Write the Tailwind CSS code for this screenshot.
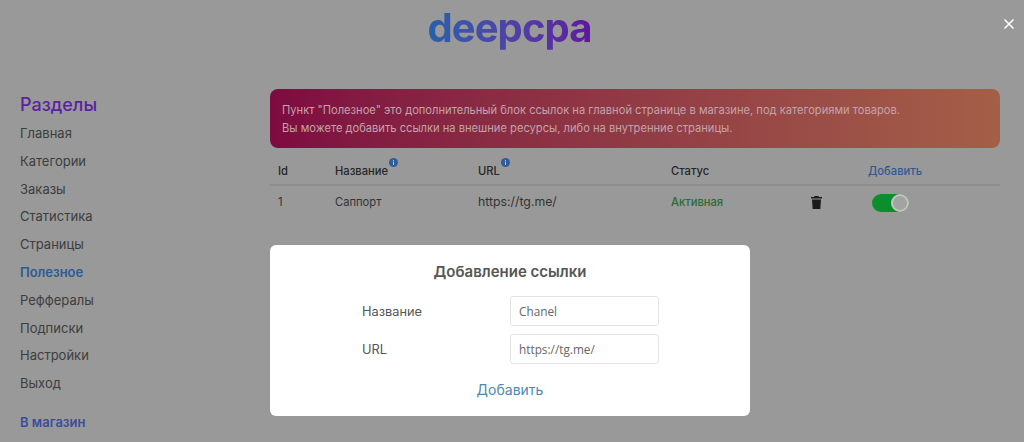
<!DOCTYPE html>
<html lang="ru">
<head>
    <meta charset="UTF-8">
    <meta name="viewport" content="width=device-width, initial-scale=1.0">
    <title>Полезное</title>
    <script src="https://cdn.jsdelivr.net/npm/@tailwindcss/browser@4"></script>
</head>
<body class="relative h-[442px] overflow-hidden bg-[#999999] font-['Inter','Liberation_Sans',sans-serif] text-[#333333]">
    <!-- Logo -->
    <header class="flex h-[89px] justify-center pr-[5px]">
        <div class="h-[56px] bg-linear-to-r from-[#2560ab] to-[#5f15a0] bg-clip-text text-[40px] leading-[56px] font-bold tracking-[-0.9px] text-transparent">deepcpa</div>
    </header>
    <button class="absolute top-[19px] right-[10px] text-white">
        <svg class="h-[10px] w-[10px]" viewBox="0 0 10 10" fill="none" stroke="currentColor" stroke-width="1.5"><path d="M.5.5l9 9M9.5.5l-9 9"/></svg>
    </button>

    <div class="flex">
        <!-- Sidebar -->
        <aside class="w-[270px] shrink-0 pl-[20px]">
            <h2 class="mt-[5px] mb-[4px] text-[18px] leading-[22px] font-medium text-[#5b23a0]">Разделы</h2>
            <ul class="text-[13px] leading-[27.8px] text-[#3d3d3d]">
                <li>Главная</li>
                <li>Категории</li>
                <li>Заказы</li>
                <li>Статистика</li>
                <li>Страницы</li>
                <li class="font-semibold text-[#2d5a94]">Полезное</li>
                <li>Реффералы</li>
                <li>Подписки</li>
                <li>Настройки</li>
                <li>Выход</li>
                <li class="mt-[11px] font-semibold text-[#3c4c9c]">В магазин</li>
            </ul>
        </aside>

        <!-- Main -->
        <main class="w-[730px]">
            <div class="h-[59px] rounded-[8px] bg-linear-to-r from-[#7d0a40] to-[#a45f47] px-[12px] pt-[12px] text-[11.15px] leading-[18px] text-[#c4a2aa]">
                <p>Пункт "Полезное" это дополнительный блок ссылок на главной странице в магазине, под категориями товаров.</p>
                <p>Вы можете добавить ссылки на внешние ресурсы, либо на внутренние страницы.</p>
            </div>
            <div class="mt-[11px] grid h-[27px] grid-cols-[57px_143px_193px_140px_57px_1fr] border-b-2 border-[#8e8e8e] pl-[8px] text-[11.2px] leading-[24px] font-medium text-[#262626]">
                <div>Id</div>
                <div class="flex">Название
                    <svg class="mt-[-1px] ml-[1px] h-[9px] w-[9px]" viewBox="0 0 9 9"><circle cx="4.5" cy="4.5" r="4.5" fill="#2f5d9b"/><rect x="4" y="3.5" width="1" height="3.5" fill="#b8c4d8"/><rect x="4" y="2" width="1" height="1" fill="#b8c4d8"/></svg>
                </div>
                <div class="flex">URL
                    <svg class="mt-[-1px] ml-[1px] h-[9px] w-[9px]" viewBox="0 0 9 9"><circle cx="4.5" cy="4.5" r="4.5" fill="#2f5d9b"/><rect x="4" y="3.5" width="1" height="3.5" fill="#b8c4d8"/><rect x="4" y="2" width="1" height="1" fill="#b8c4d8"/></svg>
                </div>
                <div>Статус</div>
                <div></div>
                <div class="font-medium text-[#2d5a94]">Добавить</div>
            </div>
            <div class="grid h-[33px] grid-cols-[57px_143px_193px_140px_57px_1fr] items-center pl-[8px] text-[11.2px] text-[#333333]">
                <div>1</div>
                <div>Саппорт</div>
                <div class="text-[12.3px]">https://tg.me/</div>
                <div class="font-medium text-[#2a6b30]">Активная</div>
                <div>
                    <svg class="h-[13px] w-[11px]" viewBox="0 0 11 13" fill="#1c1c1c"><path d="M3.5 0h4l.5 1h3v1.5H0V1h3zM1 3.5h9L9.3 13H1.7z"/></svg>
                </div>
                <div class="pl-[4px]">
                    <div class="flex h-[18px] w-[37px] justify-end rounded-full bg-[#0b8f2c]">
                        <div class="h-[18px] w-[18px] rounded-full border-2 border-[#c4c4c4] bg-[#a3a3a3]"></div>
                    </div>
                </div>
            </div>
        </main>
    </div>

    <!-- Modal -->
    <div class="absolute top-[245px] left-[270px] h-[171px] w-[480px] rounded-[6px] bg-white text-[#555555]">
        <h3 class="mt-[17px] text-center text-[15px] leading-[20px] font-semibold">Добавление ссылки</h3>
        <div class="mt-[14px] ml-[92px] flex flex-col gap-[8px] text-[12.8px]">
            <label class="flex h-[30px] items-center">
                <span class="mt-[1px] w-[148px]">Название</span>
                <input class="h-[30px] w-[149px] rounded-[3px] border border-[#e4e4e4] px-[8px] font-['Open_Sans',sans-serif] text-[11.8px] text-[#666666]" value="Chanel">
            </label>
            <label class="flex h-[30px] items-center">
                <span class="mt-[1px] w-[148px]">URL</span>
                <input class="h-[30px] w-[149px] rounded-[3px] border border-[#e4e4e4] px-[8px] font-['Open_Sans',sans-serif] text-[11.8px] text-[#666666]" value="https://tg.me/">
            </label>
        </div>
        <div class="mt-[15px] text-center text-[14px] leading-[22px] text-[#4b88b8]">Добавить</div>
    </div>
</body>
</html>
